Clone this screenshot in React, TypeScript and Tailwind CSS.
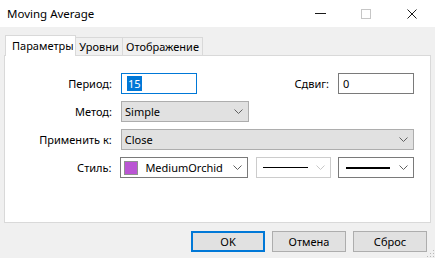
import React from "react";

const Chevron = ({ light = false }: { light?: boolean }) => (
  <svg width="9" height="5" viewBox="0 0 9 5" className="shrink-0">
    <path d="M0.5 0.5 L4.5 4.5 L8.5 0.5" fill="none" stroke={light ? "#c8c8c8" : "#606060"} strokeWidth="1" />
  </svg>
);

export default function App() {
  return (
    <div className="relative w-[435px] h-[258px] bg-[#f0f0f0] font-['Segoe_UI','Noto_Sans',sans-serif] text-[11px] text-black leading-none overflow-hidden">
      {/* title bar */}
      <div className="h-[27px] bg-white flex items-center">
        <div className="pl-[7px] flex-1 text-[11.5px]">Moving Average</div>
        <div className="flex items-center h-full">
          <div className="w-[46px] h-full flex items-center justify-center">
            <div className="w-[11px] h-px bg-[#1a1a1a]" />
          </div>
          <div className="w-[46px] h-full flex items-center justify-center">
            <div className="w-[10px] h-[10px] border border-[#c6c6c6]" />
          </div>
          <div className="w-[46px] h-full flex items-center justify-center">
            <svg width="10" height="10" viewBox="0 0 10 10">
              <path d="M0.5 0.5 L9.5 9.5 M9.5 0.5 L0.5 9.5" stroke="#1a1a1a" strokeWidth="1" />
            </svg>
          </div>
        </div>
      </div>

      {/* body */}
      <div className="pl-[4px] pr-[4px] pt-[8px]">
        {/* tabs */}
        <div className="flex items-end h-[20px] pl-[1px]">
          <div className="relative z-10 h-[21px] -mb-px w-[71px] bg-white border border-b-0 border-[#d9d9d9] flex items-center pl-[6px] pb-[1px]">
            Параметры
          </div>
          <div className="h-[18px] w-[47px] border border-l-0 border-b-0 border-[#d9d9d9] bg-[#f0f0f0] flex items-center justify-center">
            Уровни
          </div>
          <div className="h-[18px] w-[80px] border border-l-0 border-b-0 border-[#d9d9d9] bg-[#f0f0f0] flex items-center justify-center">
            Отображение
          </div>
        </div>

        {/* panel */}
        <div className="h-[168px] w-[427px] bg-white border border-[#d9d9d9] pt-[17px]">
          <div className="flex flex-col gap-[7px] w-[409px]">
            {/* row 1 */}
            <div className="flex items-center h-[21px]">
              <div className="w-[108px] text-right pr-[1px]">Период:</div>
              <div className="ml-[8px] w-[76px] h-[21px] border border-[#0078d7] flex items-center pl-[5px]">
                <span className="bg-[#0078d7] text-white px-px py-[2px]">15</span>
              </div>
              <div className="flex-1 text-right pr-[1px]">Сдвиг:</div>
              <div className="ml-[8px] w-[76px] h-[21px] border border-[#7a7a7a] flex items-center pl-[4px]">0</div>
            </div>
            {/* row 2 */}
            <div className="flex items-center h-[21px]">
              <div className="w-[108px] text-right pr-[1px]">Метод:</div>
              <div className="ml-[8px] w-[128px] h-[21px] border border-[#adadad] bg-[#e1e1e1] flex items-center pl-[3px] pr-[5px]">
                <span className="flex-1">Simple</span>
                <Chevron />
              </div>
            </div>
            {/* row 3 */}
            <div className="flex items-center h-[21px]">
              <div className="w-[108px] text-right pr-[1px]">Применить к:</div>
              <div className="ml-[8px] w-[294px] h-[21px] border border-[#adadad] bg-[#e1e1e1] flex items-center pl-[3px] pr-[5px]">
                <span className="flex-1">Close</span>
                <Chevron />
              </div>
            </div>
            {/* row 4 */}
            <div className="flex items-center h-[21px]">
              <div className="w-[108px] text-right pr-[1px]">Стиль:</div>
              <div className="ml-[8px] w-[128px] h-[21px] border border-[#7a7a7a] bg-white flex items-center pl-[3px] pr-[5px]">
                <div className="w-[14px] h-[14px] bg-[#ba55d3] border border-[#909090]" />
                <span className="flex-1 pl-[7px]">MediumOrchid</span>
                <Chevron />
              </div>
              <div className="ml-[8px] w-[76px] h-[21px] border border-[#cccccc] bg-white flex items-center pl-[6px] pr-[5px]">
                <div className="w-[45px] h-px bg-black" />
                <div className="flex-1" />
                <Chevron light />
              </div>
              <div className="ml-[7px] w-[76px] h-[21px] border border-[#7a7a7a] bg-white flex items-center pl-[7px] pr-[5px]">
                <div className="w-[44px] h-[2px] bg-black" />
                <div className="flex-1" />
                <Chevron />
              </div>
            </div>
          </div>
        </div>

        {/* buttons */}
        <div className="flex justify-end gap-[7px] pt-[8px] pr-[4px]">
          <div className="w-[74px] h-[21px] border-2 border-[#0078d7] bg-[#e1e1e1] flex items-center justify-center">OK</div>
          <div className="w-[74px] h-[21px] border border-[#adadad] bg-[#e1e1e1] flex items-center justify-center">Отмена</div>
          <div className="w-[74px] h-[21px] border border-[#adadad] bg-[#e1e1e1] flex items-center justify-center">Сброс</div>
        </div>
      </div>

      {/* resize grip */}
      <svg className="absolute right-0 bottom-0" width="8" height="8" viewBox="0 0 8 8">
        <rect x="6" y="0" width="1" height="1" fill="#b8b8b8" />
        <rect x="3" y="3" width="1" height="1" fill="#b8b8b8" />
        <rect x="6" y="3" width="1" height="1" fill="#b8b8b8" />
        <rect x="0" y="6" width="1" height="1" fill="#b8b8b8" />
        <rect x="3" y="6" width="1" height="1" fill="#b8b8b8" />
        <rect x="6" y="6" width="1" height="1" fill="#b8b8b8" />
      </svg>
    </div>
  );
}
